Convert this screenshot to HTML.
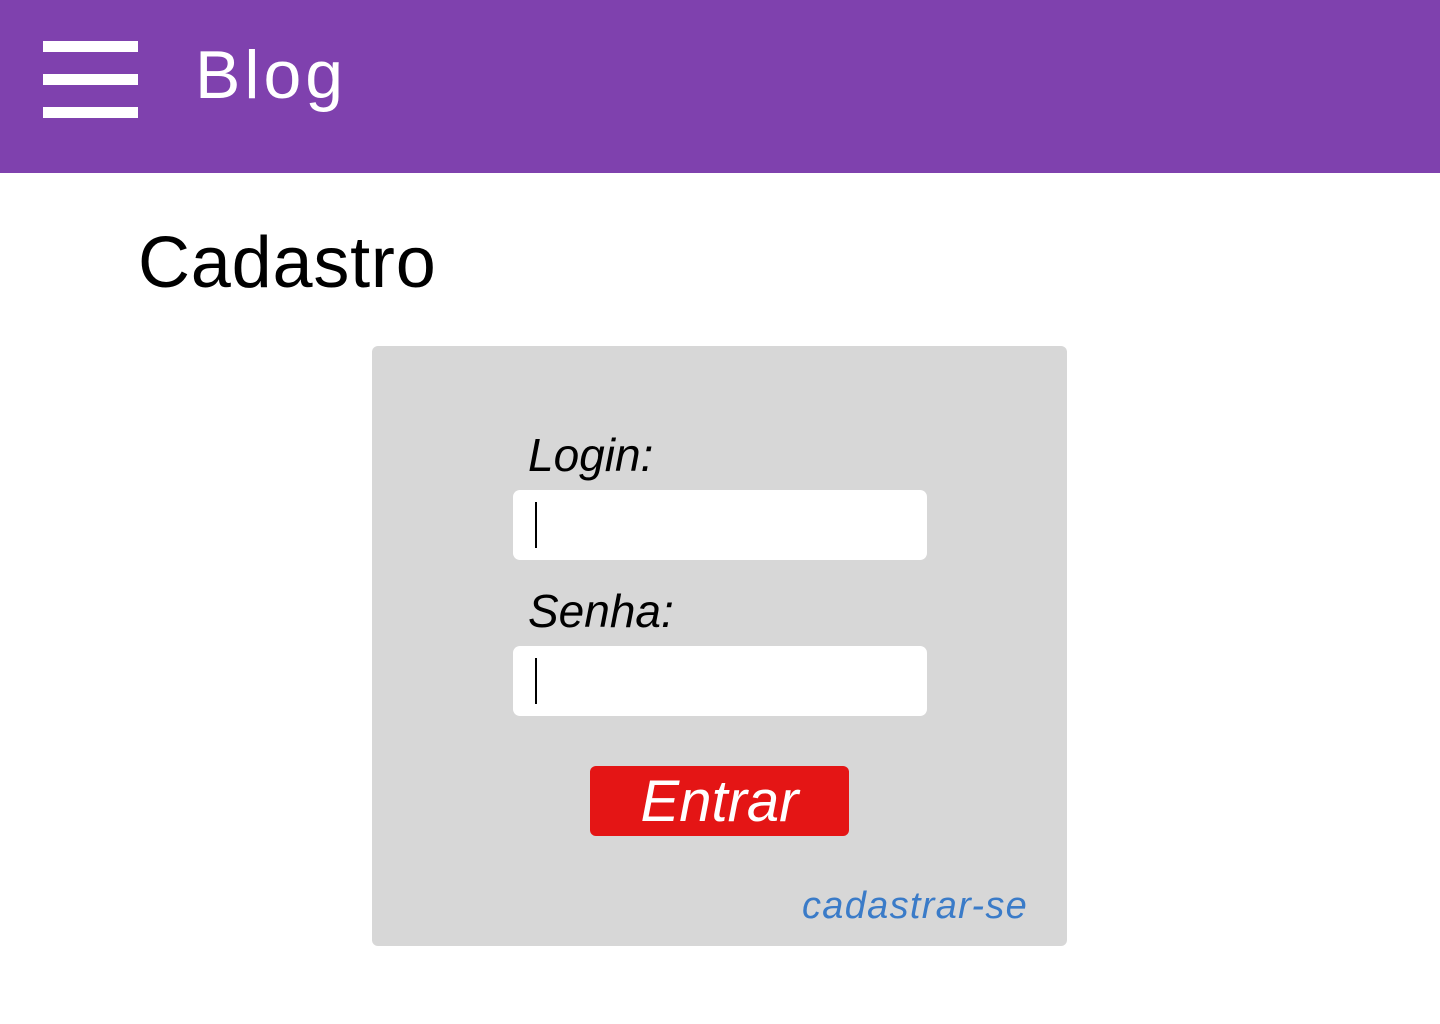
<!DOCTYPE html>
<html><head><style>
body{margin:0;width:1440px;height:1024px;background:#fff;font-family:"Liberation Sans",sans-serif;position:relative;overflow:hidden}
.hdr{position:absolute;left:0;top:0;width:1440px;height:173px;background:#7f41ae}
.bar{position:absolute;left:43px;width:95px;height:11px;background:#fff}
.t{position:absolute;white-space:nowrap}
.box{position:absolute;left:372px;top:346px;width:695px;height:600px;background:#d7d7d7;border-radius:6px}
.in{position:absolute;left:513px;width:414px;height:70px;background:#fff;border-radius:7px}
.cur{position:absolute;left:22px;top:12px;width:2px;height:46px;background:#000}
</style></head><body>
<div class="hdr">
<div class="bar" style="top:41px"></div><div class="bar" style="top:74px"></div><div class="bar" style="top:107px"></div>
<div class="t" style="left:195px;top:36px;font-size:68px;color:#fff;letter-spacing:4px">Blog</div>
</div>
<div class="t" style="left:138px;top:222px;font-size:72px;color:#000;letter-spacing:0.8px">Cadastro</div>
<div class="box"></div>
<div class="t" style="left:528px;top:428px;font-size:46px;font-style:italic">Login:</div>
<div class="in" style="top:490px"><div class="cur"></div></div>
<div class="t" style="left:528px;top:584px;font-size:46px;font-style:italic">Senha:</div>
<div class="in" style="top:646px"><div class="cur"></div></div>
<div style="position:absolute;left:590px;top:766px;width:259px;height:70px;background:#e41515;border-radius:6px"></div>
<div class="t" style="left:590px;width:259px;text-align:center;top:768px;font-size:58px;font-style:italic;color:#fff">Entrar</div>
<div class="t" style="left:802px;top:885px;font-size:38px;font-style:italic;color:#3a7bc8;letter-spacing:1.3px">cadastrar-se</div>
</body></html>
